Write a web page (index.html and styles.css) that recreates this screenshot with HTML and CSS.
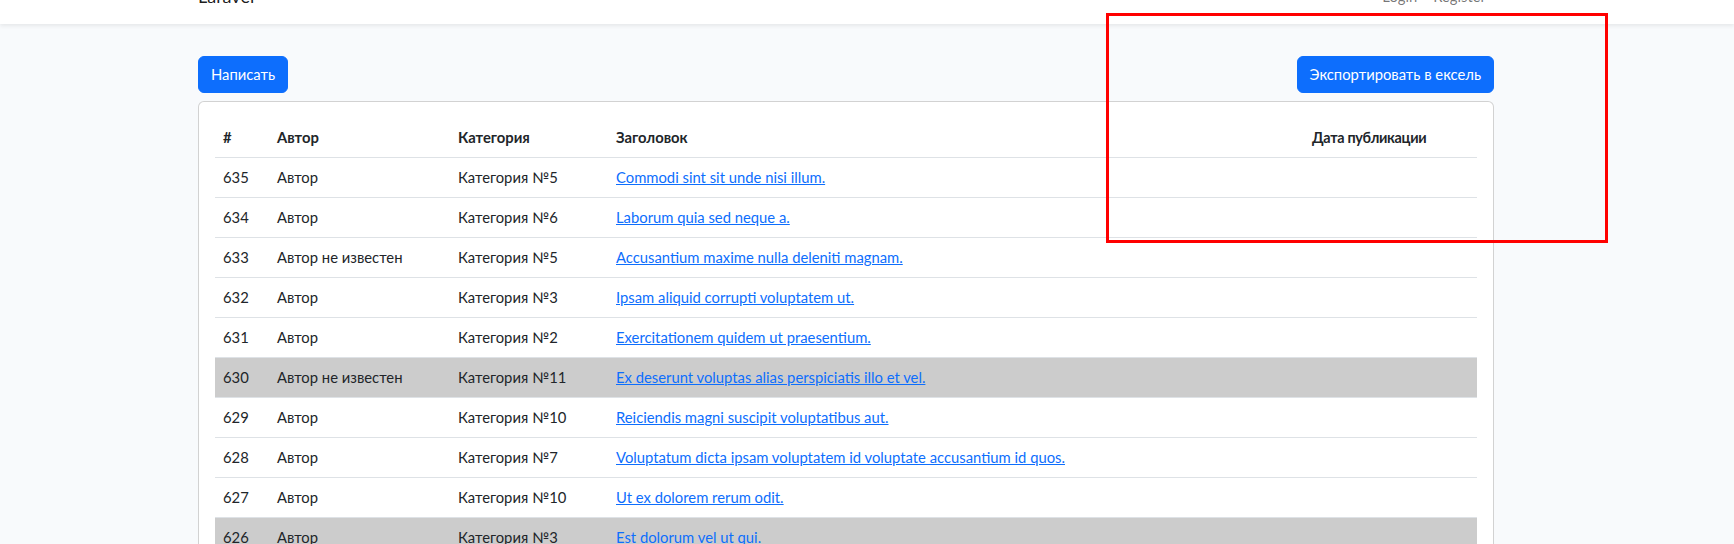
FILE: index.html
```html
<!DOCTYPE html>
<html lang="ru">
<head>
<meta charset="utf-8">
<title>Laravel</title>
<link rel="stylesheet" href="styles.css">
</head>
<body>
<nav class="navbar">
  <div class="nav-inner">
    <a class="brand" href="#">Laravel</a>
    <div class="nav-links">
      <a class="nav-link" href="#">Login</a>
      <a class="nav-link" href="#">Register</a>
    </div>
  </div>
</nav>
<main class="main">
  <div class="container">
    <div class="actions">
      <a class="btn" href="#">Написать</a>
      <a class="btn" href="#">Экспортировать в ексель</a>
    </div>
    <div class="card">
      <table class="table">
        <colgroup>
          <col class="c-id"><col class="c-author"><col class="c-cat"><col class="c-title"><col class="c-date">
        </colgroup>
        <thead>
          <tr><th>#</th><th>Автор</th><th>Категория</th><th>Заголовок</th><th class="th-date">Дата публикации</th></tr>
        </thead>
        <tbody>
          <tr><td>635</td><td>Автор</td><td>Категория №5</td><td><a href="#">Commodi sint sit unde nisi illum.</a></td><td></td></tr>
          <tr><td>634</td><td>Автор</td><td>Категория №6</td><td><a href="#">Laborum quia sed neque a.</a></td><td></td></tr>
          <tr><td>633</td><td>Автор не известен</td><td>Категория №5</td><td><a href="#">Accusantium maxime nulla deleniti magnam.</a></td><td></td></tr>
          <tr><td>632</td><td>Автор</td><td>Категория №3</td><td><a href="#">Ipsam aliquid corrupti voluptatem ut.</a></td><td></td></tr>
          <tr><td>631</td><td>Автор</td><td>Категория №2</td><td><a href="#">Exercitationem quidem ut praesentium.</a></td><td></td></tr>
          <tr class="marked"><td>630</td><td>Автор не известен</td><td>Категория №11</td><td><a href="#">Ex deserunt voluptas alias perspiciatis illo et vel.</a></td><td></td></tr>
          <tr><td>629</td><td>Автор</td><td>Категория №10</td><td><a href="#">Reiciendis magni suscipit voluptatibus aut.</a></td><td></td></tr>
          <tr><td>628</td><td>Автор</td><td>Категория №7</td><td><a href="#">Voluptatum dicta ipsam voluptatem id voluptate accusantium id quos.</a></td><td></td></tr>
          <tr><td>627</td><td>Автор</td><td>Категория №10</td><td><a href="#">Ut ex dolorem rerum odit.</a></td><td></td></tr>
          <tr class="marked"><td>626</td><td>Автор</td><td>Категория №3</td><td><a href="#">Est dolorum vel ut qui.</a></td><td></td></tr>
        </tbody>
      </table>
    </div>
  </div>
</main>
<div class="highlight"></div>
</body>
</html>
```
FILE: styles.css
```css
* { box-sizing: border-box; }
html, body { margin: 0; }
body {
  background: #f8fafc;
  font-family: Lato, "Noto Sans", sans-serif;
  font-size: 14.8px;
  line-height: 1.6;
  color: #212529;
  overflow: hidden;
}
a { color: #0d6efd; }

.navbar {
  background: #fff;
  height: 55px;
  margin-top: -31px;
  box-shadow: 0 2px 4px rgba(0,0,0,.075);
  position: relative;
}
.nav-inner {
  width: 1296px;
  margin-left: 198px;
  height: 100%;
  display: flex;
  align-items: center;
  justify-content: space-between;
}
.brand {
  font-size: 18px;
  color: rgba(0,0,0,.9);
  text-decoration: none;
  padding: 5px 0;
}
.nav-links { display: flex; }
.nav-link {
  color: rgba(0,0,0,.55);
  text-decoration: none;
  padding: 8px;
}

.main { padding-top: 32px; }
.container {
  width: 1296px;
  margin-left: 198px;
}
.actions {
  display: flex;
  justify-content: space-between;
  margin-bottom: 8px;
}
.btn {
  display: inline-block;
  background: #0d6efd;
  border: 1px solid #0d6efd;
  color: #fff;
  text-decoration: none;
  padding: 6px 12px;
  line-height: 23px;
  border-radius: 6px;
}

.card {
  background: #fff;
  border: 1px solid rgba(0,0,0,.175);
  border-radius: 6px;
  padding: 16px;
}
.table {
  width: 100%;
  border-collapse: collapse;
  table-layout: fixed;
}
.c-id { width: 54px; }
.c-author { width: 181px; }
.c-cat { width: 158px; }
.c-title { width: 696px; }
.c-date { width: 173px; }
.table th, .table td {
  text-align: left;
  padding: 8px;
  line-height: 23px;
  border-bottom: 1px solid #dee2e6;
  white-space: nowrap;
}
.table th { font-weight: 700; }
.table th.th-date {
  font-size: 14.4px;
  letter-spacing: -0.3px;
}
.table tr.marked td { background: #cccccc; }

.highlight {
  position: absolute;
  left: 1106px;
  top: 13px;
  width: 502px;
  height: 230px;
  border: 3px solid #ff0000;
}
```
